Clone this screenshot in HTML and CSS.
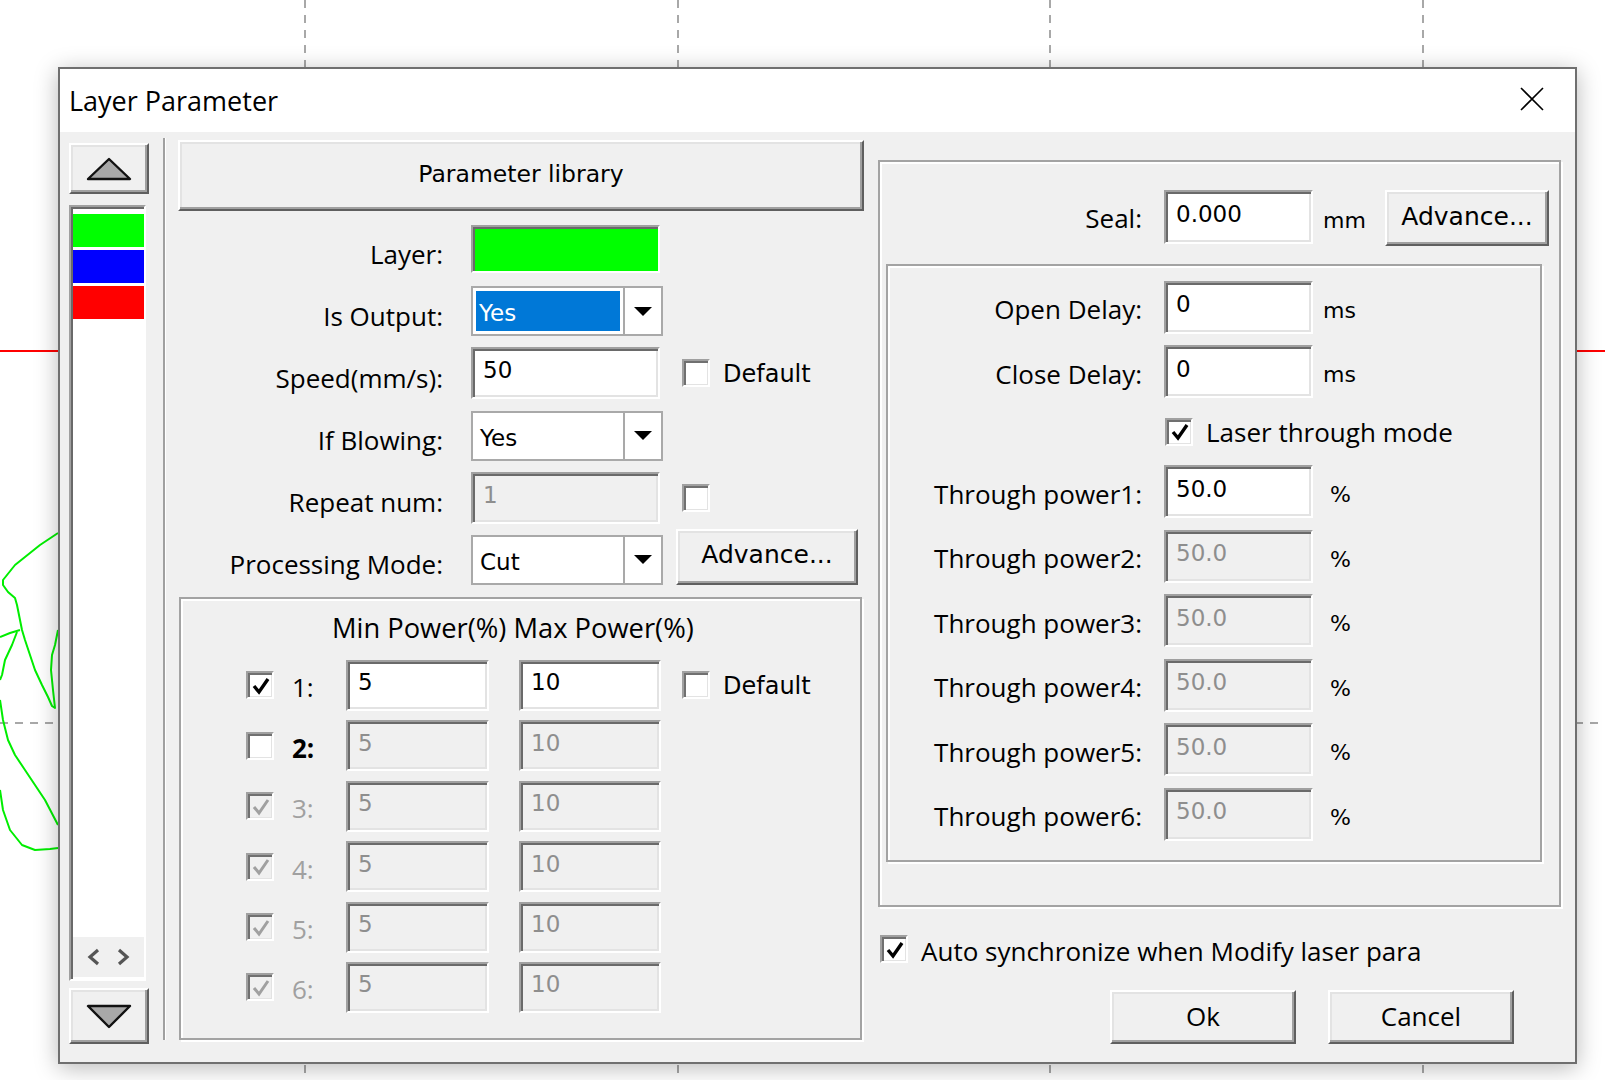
FILE: index.html
```html
<!DOCTYPE html>
<html>
<head>
<meta charset="utf-8">
<title>Layer Parameter</title>
<link rel="stylesheet" href="styles.css">
</head>
<body>
<svg class="canvas" width="1605" height="1080" viewBox="0 0 1605 1080">
  <g stroke="#a8a8a8" stroke-width="2" stroke-dasharray="8 7" fill="none">
    <line x1="305" y1="0" x2="305" y2="1080"/>
    <line x1="678" y1="0" x2="678" y2="1080"/>
    <line x1="1050" y1="0" x2="1050" y2="1080"/>
    <line x1="1423" y1="0" x2="1423" y2="1080"/>
    <line x1="0" y1="723" x2="1605" y2="723"/>
  </g>
  <line x1="0" y1="351" x2="1605" y2="351" stroke="#ff0000" stroke-width="2"/>
  <g stroke="#00ee00" stroke-width="2" fill="none" stroke-linejoin="round">
    <polyline points="58,533 40,545 25,557 15,565 3,580 3,585 8,592 15,598 17,605 20,620 22,630 25,640 30,655 35,670 42,685 48,697 52,706 55,708 53,690 51,670 52,655 55,645 58,630"/>
    <polyline points="20,630 10,633 0,637"/>
    <polyline points="17,632 12,645 5,660 2,675 0,680"/>
    <polyline points="0,700 3,720 8,740 15,755 25,770 35,785 45,800 58,825"/>
    <polyline points="0,790 3,810 10,830 22,845 35,850 50,849 58,848"/>
  </g>
</svg>

<div class="dialog">
  <div class="titlebar">
    <span class="title">Layer Parameter</span>
    <svg class="close" width="24" height="24" viewBox="0 0 24 24"><path d="M1 1L23 23M23 1L1 23" stroke="#000" stroke-width="1.6" fill="none"/></svg>
  </div>
  <div class="dbody">
    <div class="layers">
      <div class="b3d arrowbtn">
        <svg width="46" height="24" viewBox="0 0 46 24"><polygon points="23,2 44,22 2,22" fill="#a8a8a8" stroke="#111" stroke-width="2.4" stroke-linejoin="round"/></svg>
      </div>
      <div class="list">
        <div class="bar g"></div>
        <div class="bar b"></div>
        <div class="bar r"></div>
        <div class="hscroll">
          <svg width="14" height="18" viewBox="0 0 14 18"><polyline points="11,2 3,9 11,16" fill="none" stroke="#555" stroke-width="3.2"/></svg>
          <svg width="14" height="18" viewBox="0 0 14 18"><polyline points="3,2 11,9 3,16" fill="none" stroke="#555" stroke-width="3.2"/></svg>
        </div>
      </div>
      <div class="b3d arrowbtn down">
        <svg width="46" height="26" viewBox="0 0 46 26"><polygon points="2,3 44,3 23,24" fill="#a8a8a8" stroke="#111" stroke-width="2.4" stroke-linejoin="round"/></svg>
      </div>
    </div>

    <div class="vsep"></div>

    <div class="middle">
      <div class="b3d libbtn">Parameter library</div>
      <div class="form">
        <div class="lbl">Layer:</div>
        <div class="swatch"></div>
        <div></div>

        <div class="lbl">Is Output:</div>
        <div class="combo"><div class="cval"><span class="sel">Yes</span></div><div class="cdrop"><i class="tri"></i></div></div>
        <div></div>

        <div class="lbl">Speed(mm/s):</div>
        <div class="field">50</div>
        <div class="extra"><span class="cb"></span><span class="xtxt">Default</span></div>

        <div class="lbl">If Blowing:</div>
        <div class="combo"><div class="cval"><span class="plain">Yes</span></div><div class="cdrop"><i class="tri"></i></div></div>
        <div></div>

        <div class="lbl">Repeat num:</div>
        <div class="field dis">1</div>
        <div class="extra"><span class="cb"></span></div>

        <div class="lbl">Processing Mode:</div>
        <div class="combo"><div class="cval"><span class="plain">Cut</span></div><div class="cdrop"><i class="tri"></i></div></div>
        <div class="extra"><div class="b3d adv1">Advance...</div></div>
      </div>

      <div class="group powers">
        <div class="phead">Min Power(%) Max Power(%)</div>
        <div class="prows">
          <div class="prow">
            <span class="cb"><svg width="20" height="20" viewBox="0 0 20 20"><polyline points="3,10 8,16 17,3" fill="none" stroke="#000" stroke-width="3.4"/></svg></span>
            <span class="pnum">1:</span>
            <div class="field pf1">5</div>
            <div class="field pf2">10</div>
            <span class="cb pdef"></span><span class="xtxt">Default</span>
          </div>
          <div class="prow">
            <span class="cb"></span>
            <span class="pnum bold">2:</span>
            <div class="field dis pf1">5</div>
            <div class="field dis pf2">10</div>
          </div>
          <div class="prow">
            <span class="cb dis"><svg width="20" height="20" viewBox="0 0 20 20"><polyline points="3,10 8,16 17,3" fill="none" stroke="#a0a0a0" stroke-width="3"/></svg></span>
            <span class="pnum dim">3:</span>
            <div class="field dis pf1">5</div>
            <div class="field dis pf2">10</div>
          </div>
          <div class="prow">
            <span class="cb dis"><svg width="20" height="20" viewBox="0 0 20 20"><polyline points="3,10 8,16 17,3" fill="none" stroke="#a0a0a0" stroke-width="3"/></svg></span>
            <span class="pnum dim">4:</span>
            <div class="field dis pf1">5</div>
            <div class="field dis pf2">10</div>
          </div>
          <div class="prow">
            <span class="cb dis"><svg width="20" height="20" viewBox="0 0 20 20"><polyline points="3,10 8,16 17,3" fill="none" stroke="#a0a0a0" stroke-width="3"/></svg></span>
            <span class="pnum dim">5:</span>
            <div class="field dis pf1">5</div>
            <div class="field dis pf2">10</div>
          </div>
          <div class="prow">
            <span class="cb dis"><svg width="20" height="20" viewBox="0 0 20 20"><polyline points="3,10 8,16 17,3" fill="none" stroke="#a0a0a0" stroke-width="3"/></svg></span>
            <span class="pnum dim">6:</span>
            <div class="field dis pf1">5</div>
            <div class="field dis pf2">10</div>
          </div>
        </div>
      </div>
    </div>

    <div class="right">
      <div class="group outer">
        <div class="sealrow">
          <div class="lbl slbl">Seal:</div>
          <div class="field sfield">0.000</div>
          <div class="unit mm">mm</div>
          <div class="b3d adv2">Advance...</div>
        </div>
        <div class="group inner">
          <div class="lbl">Open Delay:</div><div class="field">0</div><div class="unit">ms</div>
          <div class="lbl">Close Delay:</div><div class="field">0</div><div class="unit">ms</div>
          <div></div>
          <div class="laser"><span class="cb"><svg width="20" height="20" viewBox="0 0 20 20"><polyline points="3,10 8,16 17,3" fill="none" stroke="#000" stroke-width="3.4"/></svg></span><span class="ltxt">Laser through mode</span></div>
          <div class="lbl">Through power1:</div><div class="field">50.0</div><div class="unit pct">%</div>
          <div class="lbl">Through power2:</div><div class="field dis">50.0</div><div class="unit pct">%</div>
          <div class="lbl">Through power3:</div><div class="field dis">50.0</div><div class="unit pct">%</div>
          <div class="lbl">Through power4:</div><div class="field dis">50.0</div><div class="unit pct">%</div>
          <div class="lbl">Through power5:</div><div class="field dis">50.0</div><div class="unit pct">%</div>
          <div class="lbl">Through power6:</div><div class="field dis">50.0</div><div class="unit pct">%</div>
        </div>
      </div>
      <div class="autosync">
        <span class="cb"><svg width="20" height="20" viewBox="0 0 20 20"><polyline points="3,10 8,16 17,3" fill="none" stroke="#000" stroke-width="3.4"/></svg></span>
        <span class="atxt">Auto synchronize when Modify laser para</span>
      </div>
      <div class="okrow">
        <div class="b3d okbtn">Ok</div>
        <div class="b3d okbtn">Cancel</div>
      </div>
    </div>
  </div>
</div>
</body>
</html>
```

FILE: styles.css
```css
* { box-sizing: border-box; }
html, body { margin: 0; padding: 0; }
body {
  width: 1605px;
  height: 1080px;
  overflow: hidden;
  background: #ffffff;
  position: relative;
  font-family: "Open Sans", "Noto Sans", sans-serif;
  color: #000;
}

.canvas { position: absolute; left: 0; top: 0; }

.dialog {
  position: absolute;
  left: 58px;
  top: 67px;
  width: 1519px;
  height: 997px;
  border: 2px solid #6f6f6f;
  background: #f0f0f0;
  box-shadow: 0 4px 22px rgba(0, 0, 0, 0.28);
  display: flex;
  flex-direction: column;
}

.titlebar {
  height: 63px;
  flex: none;
  background: #ffffff;
  display: flex;
  align-items: center;
  justify-content: space-between;
  padding-left: 9px;
  padding-right: 31px;
}
.title { font-size: 27px; line-height: 1; }
.close { display: block; margin-top: -3px; }

.dbody { flex: 1; display: flex; align-items: flex-start; }

/* 3D raised button */
.b3d {
  background: #f0f0f0;
  border: 2px solid;
  border-color: #ffffff #5f5f5f #5f5f5f #ffffff;
  box-shadow: inset -2px -2px 0 #a0a0a0, inset 2px 2px 0 #e3e3e3;
  display: flex;
  align-items: center;
  justify-content: center;
}

/* Layer column */
.layers {
  margin-left: 9px;
  margin-top: 11px;
  width: 80px;
  display: flex;
  flex-direction: column;
}
.arrowbtn { height: 51px; }
.arrowbtn svg { display: block; }
.arrowbtn.down { margin-top: 7px; height: 56px; }
.list {
  margin-top: 11px;
  height: 776px;
  width: 77px;
  border: 2px solid;
  border-color: #a0a0a0 #ffffff #ffffff #a0a0a0;
  box-shadow: inset 2px 2px 0 #696969;
  background: #ffffff;
  padding: 7px 0 2px 2px;
  display: flex;
  flex-direction: column;
}
.bar { height: 33px; margin-bottom: 3px; flex: none; }
.bar.g { background: #00ff00; }
.bar.b { background: #0000ff; }
.bar.r { background: #ff0000; }
.hscroll {
  margin-top: auto;
  height: 40px;
  background: #f0f0f0;
  display: flex;
  align-items: center;
  justify-content: space-around;
  padding: 0 6px;
}
.hscroll svg { display: block; }

.vsep {
  margin-left: 14px;
  margin-top: 6px;
  width: 3px;
  height: 902px;
  border-left: 2px solid #a0a0a0;
  border-right: 1px solid #ffffff;
}

/* Middle column */
.middle { margin-left: 12px; margin-top: 8px; width: 686px; }
.libbtn {
  height: 71px;
  font-family: "DejaVu Sans", sans-serif;
  font-size: 23.5px;
  padding-bottom: 4px;
}
.form {
  margin-top: 12px;
  display: grid;
  grid-template-columns: 293px 192px 1fr;
  column-gap: 0;
  grid-auto-rows: 52px;
  row-gap: 10.2px;
  align-items: center;
}
.lbl {
  text-align: right;
  font-size: 26px;
  white-space: nowrap;
  line-height: 32px;
  padding-top: 4px;
}
.form .lbl { margin-right: 28px; padding-top: 9px; }
.swatch {
  width: 189px;
  height: 48px;
  background: #00ff00;
  border: 2px solid;
  border-color: #a0a0a0 #ffffff #ffffff #a0a0a0;
  box-shadow: inset 2px 2px 0 #696969;
}
.field {
  width: 189px;
  height: 52px;
  background: #ffffff;
  border: 2px solid;
  border-color: #a0a0a0 #ffffff #ffffff #a0a0a0;
  box-shadow: inset 2px 2px 0 #6a6a6a, inset -2px -2px 0 #e3e3e3;
  font-family: "DejaVu Sans", sans-serif;
  font-size: 23px;
  padding-left: 10px;
  padding-bottom: 6px;
  display: flex;
  align-items: center;
}
.field.dis { background: #f0f0f0; color: #8e8e8e; }

.combo {
  width: 192px;
  height: 50px;
  background: #ffffff;
  border: 2px solid #a9a9a9;
  display: flex;
}
.cval { flex: 1; padding: 3px; display: flex; }
.sel {
  flex: 1;
  background: #0078d7;
  color: #ffffff;
  display: flex;
  align-items: center;
  padding-left: 3px;
  padding-top: 4px;
  font-family: "DejaVu Sans", sans-serif;
  font-size: 23px;
}
.plain {
  display: flex;
  align-items: center;
  padding-left: 4px;
  padding-top: 4px;
  font-family: "DejaVu Sans", sans-serif;
  font-size: 23px;
}
.cdrop {
  width: 38px;
  border-left: 2px solid #a9a9a9;
  display: flex;
  align-items: center;
  justify-content: center;
}
.tri {
  display: block;
  width: 0;
  height: 0;
  border-left: 9px solid transparent;
  border-right: 9px solid transparent;
  border-top: 9px solid #000;
}

.extra { display: flex; align-items: center; }
.form .extra .cb { margin-left: 19px; }
.xtxt {
  font-family: "DejaVu Sans", sans-serif;
  font-size: 24px;
  margin-left: 13px;
  padding-top: 2px;
}
.adv1 {
  width: 182px;
  height: 56px;
  margin-left: 13px;
  margin-top: -6px;
  font-family: "DejaVu Sans", sans-serif;
  font-size: 25px;
  padding-bottom: 4px;
}

/* checkbox */
.cb {
  width: 28px;
  height: 28px;
  flex: none;
  background: #ffffff;
  border: 2px solid;
  border-color: #a0a0a0 #ffffff #ffffff #a0a0a0;
  box-shadow: inset 2px 2px 0 #707070, inset -1px -1px 0 #e3e3e3;
  display: flex;
  align-items: center;
  justify-content: center;
}
.cb svg { display: block; margin: 1px 0 0 1px; }
.cb.dis { background: #f0f0f0; }

/* group boxes */
.group {
  border: 2px solid #a3a3a3;
  box-shadow: inset 2px 2px 0 #ffffff, 2px 2px 0 #ffffff;
}

.powers {
  margin-top: 11px;
  margin-left: 1px;
  width: 683px;
  height: 443px;
  padding-left: 65px;
}
.phead {
  margin-top: 14px;
  padding-left: 86px;
  height: 30px;
  line-height: 30px;
  font-size: 27.3px;
  white-space: nowrap;
}
.prows {
  margin-top: 17px;
  display: flex;
  flex-direction: column;
  gap: 9.4px;
}
.prow { height: 51px; display: flex; align-items: center; }
.pnum {
  width: 54px;
  margin-left: 18px;
  font-size: 26px;
  padding-top: 4px;
}
.pnum.bold { font-weight: 700; }
.pnum.dim { color: #a0a0a0; }
.pf1 { width: 143px; height: 51px; }
.pf2 { width: 142px; height: 51px; margin-left: 30px; }
.pdef { margin-left: 21px; }

/* Right column */
.right { margin-left: 14px; margin-top: 28px; width: 683px; }
.outer { height: 747px; padding-top: 28px; }
.sealrow { display: flex; align-items: flex-start; height: 56px; }
.slbl { width: 262px; margin-right: 22px; padding-top: 12px; }
.sfield { width: 149px; height: 54px; }
.unit {
  font-family: "DejaVu Sans", sans-serif;
  font-size: 22px;
  padding-left: 10px;
}
.mm { width: 72px; padding-top: 18px; }
.adv2 {
  width: 164px;
  height: 56px;
  font-family: "DejaVu Sans", sans-serif;
  font-size: 25px;
  padding-bottom: 4px;
}

.inner {
  margin-top: 18px;
  margin-left: 6px;
  width: 656px;
  height: 598px;
  padding-top: 14.5px;
  display: grid;
  grid-template-columns: 254px 171px 1fr;
  grid-template-rows: 53px 53px 44px repeat(6, 53px);
  row-gap: 11.5px;
  column-gap: 0;
  align-items: center;
}
.inner .field { width: 149px; height: 53px; margin-left: 22px; }
.inner .unit { padding-top: 6px; }
.inner .pct { padding-left: 17px; }
.laser {
  grid-column: 2 / 4;
  margin-left: 23px;
  display: flex;
  align-items: center;
}
.ltxt { font-size: 26px; margin-left: 13px; white-space: nowrap; }

.autosync {
  margin-top: 28px;
  margin-left: 2px;
  height: 28px;
  display: flex;
  align-items: center;
}
.atxt { font-size: 26px; margin-left: 13px; white-space: nowrap; line-height: 28px; padding-top: 4px; }

.okrow {
  margin-top: 27px;
  display: flex;
  justify-content: flex-end;
  gap: 32px;
  padding-right: 47px;
}
.okbtn {
  width: 186px;
  height: 54px;
  font-size: 26px;
  padding-bottom: 2px;
}
```
